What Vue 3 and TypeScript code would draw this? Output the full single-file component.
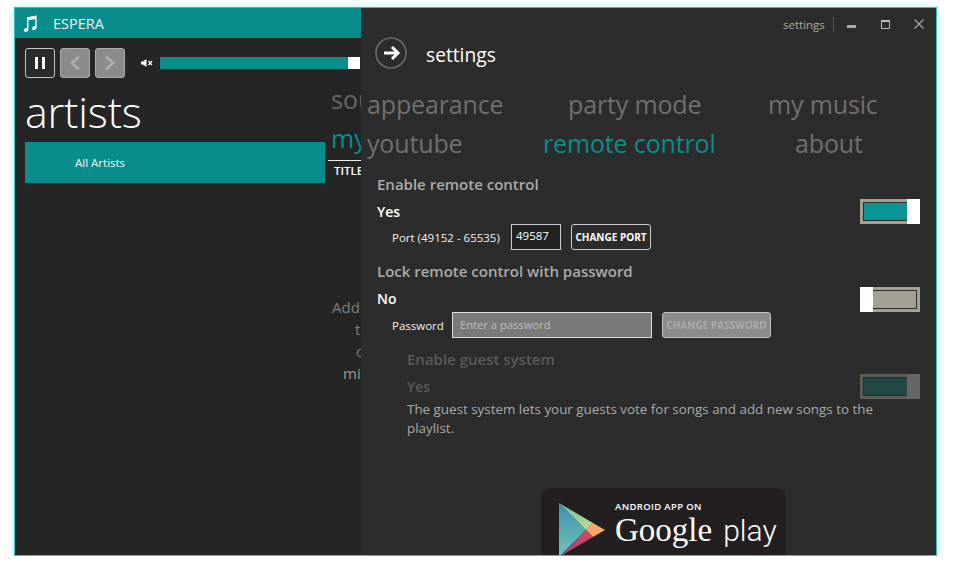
<script setup lang="ts">
const rowOne: string[] = ['appearance', 'party mode', 'my music']
const rowTwo: string[] = ['youtube', 'remote control', 'about']
</script>

<template>
  <div class="window">
    <header class="titlebar">
      <svg class="note" width="16" height="17" viewBox="0 0 16 17">
        <path fill="#fff" d="M5 2.200 14.600 .4V12.600C14.600 14 13.300 15 11.900 15 10.700 15 10 14.300 10 13.400 10 12.200 11.300 11.200 12.600 11.200 12.900 11.200 13.100 11.250 13.300 11.300V4L6.400 5.300V14.400C6.400 15.800 5.100 16.800 3.700 16.800 2.500 16.800 1.800 16.100 1.800 15.200 1.800 14 3.100 13 4.400 13 4.600 13 4.800 13.050 5 13.100Z" />
      </svg>
      <span class="app-name">ESPERA</span>
    </header>

    <div class="transport">
      <button class="tbtn">
        <svg width="10" height="12" viewBox="0 0 10 12"><path fill="#fff" d="M0 0h3v12H0zM7 0h3v12H7z" /></svg>
      </button>
      <button class="tbtn off">
        <svg width="12" height="16" viewBox="0 0 12 16"><path fill="none" stroke="#ababab" stroke-width="3" d="M10 1.500 3 8l7 6.500" /></svg>
      </button>
      <button class="tbtn off">
        <svg width="12" height="16" viewBox="0 0 12 16"><path fill="none" stroke="#ababab" stroke-width="3" d="M2 1.500 9 8l-7 6.500" /></svg>
      </button>
      <svg class="mute" width="12" height="8" viewBox="0 0 12 8">
        <path fill="#fff" d="M0 2.500h2L5.500 0v8L2 5.500H0z" />
        <path fill="none" stroke="#fff" stroke-width="1.200" d="M7.500 2 11 6M11 2 7.500 6" />
      </svg>
      <div class="slider"><div class="slider-fill"></div><div class="slider-thumb"></div></div>
    </div>

    <div class="content">
      <section class="artists">
        <h1 class="artists-title">artists</h1>
        <div class="artist-item">All Artists</div>
      </section>
      <section class="songs">
        <div class="songs-tab">sou</div>
        <div class="songs-tab current">my</div>
        <div class="songs-head">TITLE</div>
        <div class="hint">
          <div class="h1">Add</div>
          <div class="h2">t</div>
          <div class="h3">c</div>
          <div class="h4">mi</div>
        </div>
      </section>
    </div>

    <aside class="settings">
      <div class="wincontrols">
        <span class="wc-label">settings</span>
        <span class="wc-sep"></span>
        <svg class="wc-min" width="9" height="3" viewBox="0 0 9 3"><rect width="9" height="3" fill="#aaa" /></svg>
        <svg class="wc-max" width="9" height="9" viewBox="0 0 9 9"><path fill="none" stroke="#bbb" d="M.5 .5h8v8h-8z" /><rect width="9" height="2" fill="#bbb" /></svg>
        <svg class="wc-close" width="10" height="10" viewBox="0 0 10 10"><path fill="none" stroke="#aaa" stroke-width="1.100" d="M.5 .5l9 9M9.500 .5l-9 9" /></svg>
      </div>

      <div class="settings-head">
        <svg width="32" height="32" viewBox="0 0 32 32">
          <circle cx="16" cy="16" r="15" fill="none" stroke="#6a6a6a" stroke-width="1.600" />
          <path fill="none" stroke="#fff" stroke-width="3" d="M9 16h13M17 10l6 6-6 6" />
        </svg>
        <span class="settings-title">settings</span>
      </div>

      <nav class="tabs">
        <div class="tab-row first"><span v-for="t in rowOne" :key="t">{{ t }}</span></div>
        <div class="tab-row second">
          <span v-for="t in rowTwo" :key="t" :class="{ active: t === 'remote control' }">{{ t }}</span>
        </div>
      </nav>

      <div class="form">
        <h2 class="section">Enable remote control</h2>
        <div class="state-row">
          <span class="state">Yes</span>
          <span class="toggle on"><i class="fill"></i><i class="thumb"></i></span>
        </div>
        <div class="field-row">
          <label class="field-label port-label">Port (49152 - 65535)</label>
          <span class="port">49587</span>
          <button class="action">CHANGE PORT</button>
        </div>

        <h2 class="section second-section">Lock remote control with password</h2>
        <div class="state-row">
          <span class="state nudge">No</span>
          <span class="toggle offstate"><i class="thumb"></i><i class="fill"></i></span>
        </div>
        <div class="field-row">
          <label class="field-label pw-label">Password</label>
          <span class="password">Enter a password</span>
          <button class="action disabled">CHANGE PASSWORD</button>
        </div>

        <div class="guest">
          <h2 class="section dim">Enable guest system</h2>
          <div class="state-row guest-row">
            <span class="state dim">Yes</span>
            <span class="toggle dimmed"><i class="fill"></i><i class="thumb"></i></span>
          </div>
          <p class="desc">The guest system lets your guests vote for songs and add new songs to the playlist.</p>
        </div>

        <div class="badge">
          <svg class="play" width="47" height="54" viewBox="0 0 47 54">
            <defs>
              <linearGradient id="gLeft" x1="0" y1="0" x2="0" y2="1">
                <stop offset="0" stop-color="#3a8fb4" />
                <stop offset="1" stop-color="#72c6b4" />
              </linearGradient>
              <linearGradient id="gTop" x1="0" y1="0" x2="1" y2="1">
                <stop offset="0" stop-color="#5fbfa8" />
                <stop offset="1" stop-color="#c5dc96" />
              </linearGradient>
              <linearGradient id="gBottom" x1="0" y1="1" x2="1" y2="0">
                <stop offset="0" stop-color="#8a4a92" />
                <stop offset="1" stop-color="#e0444f" />
              </linearGradient>
            </defs>
            <polygon points="0,0 27,27 0,54" fill="url(#gLeft)" />
            <polygon points="0,0 34,20 27,27" fill="url(#gTop)" />
            <polygon points="34,20 46,27 34,34 27,27" fill="#fba66a" />
            <polygon points="0,54 27,27 34,34" fill="url(#gBottom)" />
          </svg>
          <div class="badge-text">
            <div class="badge-top">ANDROID APP ON</div>
            <div class="badge-main"><span class="goog">Google</span><span class="gplay">play</span></div>
          </div>
        </div>
      </div>
    </aside>
  </div>
</template>

<style>
html, body { margin: 0; background: #fff; }
</style>

<style scoped>
.window {
  position: relative;
  box-sizing: border-box;
  width: 923px;
  height: 549px;
  margin: 7px 0 0 14px;
  border: 1px solid #3dbdbd;
  background: #252525;
  box-shadow: 0 0 7px rgba(60, 210, 210, .45);
  overflow: hidden;
  font-family: "Open Sans", "Noto Sans", sans-serif;
  color: #fff;
}
.titlebar { height: 30px; background: #088d8b; display: flex; align-items: center; }
.note { margin-left: 7px; }
.app-name { margin-left: 15px; font-size: 14.500px; color: #e8f4f4; }
.transport { display: flex; align-items: center; padding: 10px 0 0 10px; }
.tbtn {
  width: 30px; height: 30px; padding: 0; margin-right: 5px; box-sizing: border-box;
  display: flex; align-items: center; justify-content: center;
  background: #2a2a2a; border: 1px solid #c4c4c4; border-radius: 3px;
}
.tbtn.off { background: #8b8b8b; border-color: #acacac; }
.mute { margin: 0 7px 0 11px; }
.slider { display: flex; width: 200px; height: 12px; }
.slider-fill { width: 188px; background: #088d8b; }
.slider-thumb { width: 12px; background: #fff; }
.content { display: flex; padding-left: 10px; }
.artists { width: 300px; margin-right: 3px; }
.artists-title { margin: 0; height: 64px; font-size: 43px; font-weight: 300; line-height: 68px; letter-spacing: -.2px; }
.artist-item {
  height: 41px; line-height: 41px; padding-left: 50px;
  background: #088d8b; font-size: 11.500px; color: #f2f8f8;
}
.songs { width: 33px; overflow: hidden; }
.songs-tab { padding-left: 3px; height: 39px; line-height: 42px; font-size: 25px; white-space: nowrap; color: #666; }
.songs-tab.current { color: #088d8b; }
.songs-head { border-top: 1px solid #eee; padding: 2px 0 0 6px; margin-top: 4px; font-size: 11.500px; font-weight: 600; white-space: nowrap; }
.hint { margin-top: 118px; font-size: 15px; line-height: 22px; color: #7d7d7d; white-space: nowrap; }
.h1 { padding-left: 4px; }
.h2 { padding-left: 27px; }
.h3 { padding-left: 28px; }
.h4 { padding-left: 15px; color: #9a9a8a; }
.settings {
  position: absolute; left: 346px; top: 0; right: 0; bottom: 0;
  background: #2c2c2c; overflow: hidden;
}
.wincontrols { display: flex; align-items: center; height: 32px; padding-left: 422px; }
.wc-label { font-size: 11.500px; color: #aaa; width: 42px; }
.wc-sep { width: 1px; height: 15px; margin-left: 8px; background: #555; }
.wc-min { margin: 5px 0 0 13px; }
.wc-max { margin-left: 25px; }
.wc-close { margin-left: 24px; }
.settings-head { display: flex; align-items: center; padding: 0 0 0 14px; height: 32px; margin-top: -3px; }
.settings-title { margin: 2px 0 0 19px; font-size: 19.200px; }
.tabs { padding: 0 0 0 6px; margin: 16px 0 11px; }
.tab-row { display: grid; height: 39px; line-height: 39px; font-size: 25px; letter-spacing: -.15px; color: #6f6f6f; white-space: nowrap; }
.tab-row.first { grid-template-columns: 201px 200px auto; }
.tab-row.second { grid-template-columns: 176px 252px auto; }
.tab-row .active { color: #088d8b; }
.form { padding: 0 16px 0 16px; }
.section { margin: 0; height: 20px; line-height: 20px; font-size: 15px; font-weight: 600; color: #ababab; white-space: nowrap; }
.second-section { margin-top: 11px; line-height: 20px; }
.state-row { display: flex; align-items: center; justify-content: space-between; height: 25px; margin-top: 5px; }
.second-section + .state-row { margin-top: 6px; }
.state { font-size: 14px; font-weight: 600; color: #fff; }
.state.nudge { margin-bottom: 2px; }
.dim { color: #5a5a5a; }
.toggle { display: flex; box-sizing: border-box; width: 60px; height: 25px; border: 3px solid #a69f94; position: relative; background: #2c2c2c; }
.fill { position: absolute; top: 1px; bottom: 1px; }
.thumb { position: absolute; top: -3px; bottom: -3px; width: 13px; background: #fff; }
.toggle.on .fill { left: 1px; right: 10px; background: #0a9794; }
.toggle.on .thumb { right: -3px; }
.toggle.offstate .fill { left: 10px; right: 1px; background: #a69f94; }
.toggle.offstate .thumb { left: -3px; }
.toggle.dimmed { border-color: #5f5b55; }
.toggle.dimmed .fill { left: 1px; right: 10px; background: #224845; }
.toggle.dimmed .thumb { right: -3px; background: #666; }
.field-row { display: flex; align-items: center; height: 26px; padding-left: 15px; }
.field-label { font-size: 11.500px; color: #f0f0f0; white-space: nowrap; }
.port-label { width: 109px; }
.pw-label { width: 50px; }
.port {
  box-sizing: border-box; width: 50px; height: 26px; margin-left: 10px; padding: 0 0 0 4px;
  border: 1px solid #ccc; background: #222; font-size: 11.500px; line-height: 22px;
}
.action {
  box-sizing: border-box; height: 26px; padding: 0; margin-left: 10px; width: 80px;
  border: 1px solid #ccc; border-radius: 3px; background: #2c2c2c; color: #fff;
  font-family: inherit; font-size: 10px; font-weight: 700; white-space: nowrap;
}
.action.disabled { width: 109px; background: #8c8c8c; border-color: #c0c0c0; color: #aaa; }
.password {
  box-sizing: border-box; width: 200px; height: 26px; margin-left: 10px; padding-left: 7px;
  border: 1px solid #ddd; background: #7a7a7a; color: #bdbdbd; font-size: 11.200px; line-height: 24px;
}
.guest { padding-left: 30px; margin-top: 12px; }
.guest .section { line-height: 18px; }
.guest-row { margin-top: 4px; }
.desc { margin: 1px 0 0; width: 480px; font-size: 13.400px; line-height: 19px; color: #aaa; }
.badge {
  display: flex; width: 245px; height: 100px; margin: 50px 0 0 164px; box-sizing: border-box;
  padding: 15px 0 0 18px; background: #231f20; border-radius: 10px;
}
.badge-text { margin-left: 9px; }
.badge-top { font-size: 9.500px; font-weight: 600; letter-spacing: .35px; line-height: 11px; margin-top: -2px; }
.badge-main { display: flex; align-items: baseline; line-height: 36px; }
.goog { font-family: "Liberation Serif", serif; font-size: 33px; }
.gplay { margin-left: 11px; font-family: Roboto, sans-serif; font-size: 30px; font-weight: 300; }
</style>
